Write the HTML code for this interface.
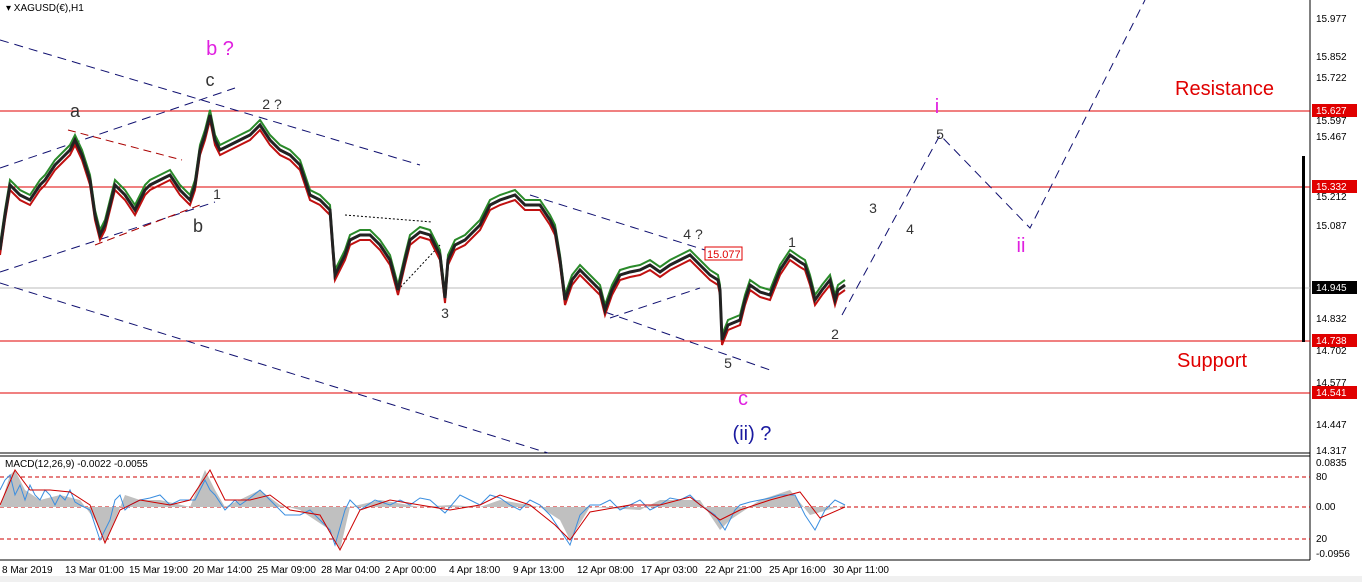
<!DOCTYPE html><html><head><style>
body{margin:0;background:#fff;width:1362px;height:582px;overflow:hidden;font-family:"Liberation Sans",sans-serif}
svg text{font-family:"Liberation Sans",sans-serif}
</style></head><body>
<svg width="1362" height="582" viewBox="0 0 1362 582" xmlns="http://www.w3.org/2000/svg">
<defs>
<polyline id="pr" fill="none" points="0,250 5,215 10,185 20,195 30,200 40,185 45,180 55,165 60,160 70,150 75,140 82,155 90,180 95,215 100,235 105,225 115,185 125,195 135,210 145,190 150,185 160,180 170,175 180,190 190,200 195,185 200,150 205,135 210,115 215,140 220,150 230,145 240,140 250,135 260,125 270,140 280,150 290,155 300,165 305,180 310,195 320,200 330,210 333,250 335,275 345,255 350,240 360,235 370,235 380,245 390,260 398,290 405,260 410,240 420,232 430,235 440,255 445,298 448,260 455,245 465,240 470,235 480,225 490,205 500,200 515,195 525,205 540,205 550,220 555,230 560,260 565,300 572,280 580,270 590,280 600,290 605,310 612,290 620,275 630,272 640,270 650,265 660,272 670,265 680,260 690,255 700,265 710,275 718,280 720,290 722,340 728,325 740,320 745,300 750,285 760,292 770,295 780,270 790,255 800,262 805,265 810,280 815,300 822,290 830,280 835,300 838,290 845,285"/>
</defs>
<rect width="1362" height="582" fill="#fff"/>
<line x1="1310" y1="0" x2="1310" y2="560" stroke="#000"/>
<line x1="0" y1="453" x2="1310" y2="453" stroke="#000"/>
<line x1="0" y1="456" x2="1310" y2="456" stroke="#000"/>
<line x1="0" y1="560" x2="1310" y2="560" stroke="#000"/>
<rect x="0" y="576" width="1362" height="6" fill="#f0f0f0"/>
<g stroke="#e00000" stroke-width="1">
<line x1="0" y1="111" x2="1310" y2="111"/><line x1="0" y1="187" x2="1310" y2="187"/>
<line x1="0" y1="341" x2="1310" y2="341"/><line x1="0" y1="393" x2="1310" y2="393"/></g>
<line x1="0" y1="288" x2="1310" y2="288" stroke="#bbb"/>
<g stroke="#101070" stroke-dasharray="9,6" fill="none">
<line x1="0" y1="40" x2="420" y2="165"/><line x1="0" y1="283" x2="548" y2="453"/>
<line x1="0" y1="168" x2="235" y2="88"/><line x1="0" y1="272" x2="215" y2="202"/>
<line x1="530" y1="195" x2="705" y2="250"/><line x1="605" y1="312" x2="770" y2="370"/>
<line x1="610" y1="318" x2="700" y2="288"/>
<polyline points="842,315 940,135 1030,228 1145,0"/>
</g>
<g stroke="#a00" stroke-dasharray="8,5"><line x1="68" y1="130" x2="182" y2="160"/><line x1="95" y1="245" x2="200" y2="205"/></g>
<g stroke="#000" stroke-dasharray="2,2"><line x1="345" y1="215" x2="432" y2="222"/><line x1="398" y1="290" x2="440" y2="245"/></g>
<use href="#pr" stroke="#2a8a2a" stroke-width="2" transform="translate(0,-5)"/>
<use href="#pr" stroke="#c01010" stroke-width="2" transform="translate(0,5)"/>
<use href="#pr" stroke="#222" stroke-width="3"/>
<g font-size="16" fill="#333" text-anchor="middle">
<text x="75" y="117" font-size="18">a</text><text x="210" y="86" font-size="18">c</text><text x="198" y="232" font-size="18">b</text>
<text x="272" y="109" font-size="14">2 ?</text><text x="217" y="199" font-size="14">1</text><text x="445" y="318" font-size="14">3</text>
<text x="693" y="239" font-size="14">4 ?</text><text x="728" y="368" font-size="14">5</text>
<text x="792" y="247" font-size="14">1</text><text x="835" y="339" font-size="14">2</text>
<text x="873" y="213" font-size="14">3</text><text x="910" y="234" font-size="14">4</text><text x="940" y="139" font-size="14">5</text>
</g>
<g fill="#e020e0" font-size="20" text-anchor="middle"><text x="220" y="55">b ?</text><text x="743" y="405">c</text><text x="937" y="113">i</text><text x="1021" y="252">ii</text></g>
<text x="752" y="440" fill="#1a1aa0" font-size="20" text-anchor="middle">(ii) ?</text>
<text x="1175" y="95" fill="#e00000" font-size="20">Resistance</text>
<text x="1177" y="367" fill="#e00000" font-size="20">Support</text>
<rect x="705" y="247" width="37" height="13" fill="#fff" stroke="#e00000"/><text x="707" y="258" font-size="11" fill="#e00000">15.077</text>
<text x="6" y="11" font-size="10" fill="#000">▾ XAGUSD(€),H1</text>
<g font-size="10" fill="#000">
<text x="1316" y="22">15.977</text><text x="1316" y="60">15.852</text><text x="1316" y="81">15.722</text>
<text x="1316" y="124">15.597</text><text x="1316" y="140">15.467</text><text x="1316" y="200">15.212</text>
<text x="1316" y="229">15.087</text><text x="1316" y="322">14.832</text><text x="1316" y="354">14.702</text>
<text x="1316" y="386">14.577</text><text x="1316" y="428">14.447</text><text x="1316" y="454">14.317</text>
<text x="1316" y="466">0.0835</text><text x="1316" y="480">80</text><text x="1316" y="510">0.00</text><text x="1316" y="542">20</text><text x="1316" y="557">-0.0956</text>
</g>
<rect x="1312" y="104" width="45" height="13" fill="#e00000"/><text x="1316" y="114" font-size="10" fill="#fff">15.627</text>
<rect x="1312" y="180" width="45" height="13" fill="#e00000"/><text x="1316" y="190" font-size="10" fill="#fff">15.332</text>
<rect x="1312" y="281" width="45" height="13" fill="#000"/><text x="1316" y="291" font-size="10" fill="#fff">14.945</text>
<rect x="1312" y="334" width="45" height="13" fill="#e00000"/><text x="1316" y="344" font-size="10" fill="#fff">14.738</text>
<rect x="1312" y="386" width="45" height="13" fill="#e00000"/><text x="1316" y="396" font-size="10" fill="#fff">14.541</text>
<rect x="1302" y="156" width="3" height="186" fill="#000"/>
<g stroke="#c00" stroke-dasharray="4,3"><line x1="0" y1="477" x2="1310" y2="477"/><line x1="0" y1="507" x2="1310" y2="507"/><line x1="0" y1="539" x2="1310" y2="539"/></g>
<polygon fill="#c0c0c0" points="0,507 10,475 15,470 25,490 40,500 60,495 80,500 95,520 105,542 115,520 125,495 140,500 160,500 190,507 205,470 215,490 225,507 260,490 280,505 300,510 330,530 340,550 350,507 380,500 420,507 450,505 480,507 500,500 540,507 560,520 570,540 590,507 640,510 660,500 700,500 720,530 730,520 760,500 790,490 810,515 845,505 845,507"/>
<polyline fill="none" stroke="#3a8ee0" points="0,490 5,480 10,475 15,495 20,485 25,500 30,485 35,495 40,500 45,490 50,495 55,505 60,495 65,500 70,490 75,502 80,505 90,510 95,525 100,540 110,520 115,500 120,495 125,510 130,505 140,500 150,498 160,495 170,505 180,500 195,500 205,480 210,490 215,495 225,510 235,500 240,505 250,498 260,490 270,500 285,515 300,515 310,510 320,520 330,530 335,545 345,510 350,500 360,510 375,500 390,505 400,500 410,505 420,498 430,500 445,513 460,495 470,500 480,505 490,495 500,498 510,505 520,510 530,500 540,505 550,515 560,530 570,545 580,515 590,505 600,505 610,500 620,510 630,505 640,500 650,510 660,505 670,498 680,500 690,495 700,505 715,515 725,530 735,510 740,505 750,502 760,500 770,498 780,495 795,495 805,515 815,530 825,510 835,500 845,505"/>
<polyline fill="none" stroke="#c00" points="0,505 15,470 30,490 50,490 70,492 90,505 105,543 120,510 140,500 170,505 190,500 210,470 225,500 250,500 270,495 290,510 320,515 340,550 360,510 390,500 420,505 450,510 480,505 500,495 530,505 555,525 570,540 590,512 630,505 660,505 690,497 720,520 740,510 770,500 800,492 820,518 845,507"/>
<text x="5" y="467" font-size="10" fill="#000">MACD(12,26,9) -0.0022 -0.0055</text>
<g font-size="10" fill="#000">
<text x="2" y="573">8 Mar 2019</text><text x="65" y="573">13 Mar 01:00</text><text x="129" y="573">15 Mar 19:00</text><text x="193" y="573">20 Mar 14:00</text><text x="257" y="573">25 Mar 09:00</text><text x="321" y="573">28 Mar 04:00</text><text x="385" y="573">2 Apr 00:00</text><text x="449" y="573">4 Apr 18:00</text><text x="513" y="573">9 Apr 13:00</text><text x="577" y="573">12 Apr 08:00</text><text x="641" y="573">17 Apr 03:00</text><text x="705" y="573">22 Apr 21:00</text><text x="769" y="573">25 Apr 16:00</text><text x="833" y="573">30 Apr 11:00</text>
</g>
</svg>
</body></html>
